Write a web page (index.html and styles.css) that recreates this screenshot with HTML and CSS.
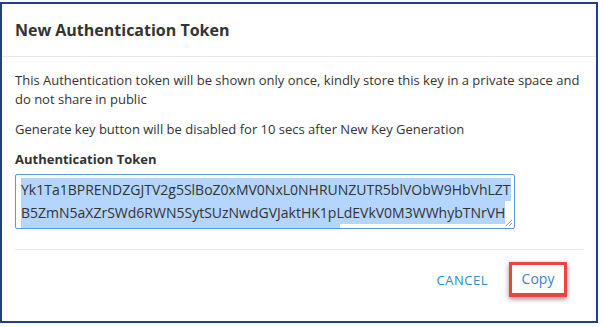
FILE: index.html
```html
<!DOCTYPE html>
<html lang="en">
<head>
    <meta charset="UTF-8">
    <title>New Authentication Token</title>
    <link rel="stylesheet" href="styles.css">
</head>
<body>
    <div class="modal">
        <div class="modal-header">
            <h2 class="modal-title">New Authentication Token</h2>
        </div>
        <div class="modal-body">
            <p class="note">This Authentication token will be shown only once, kindly store this key in a private space and do not share in public</p>
            <p class="note">Generate key button will be disabled for 10 secs after New Key Generation</p>
            <label class="field-label">Authentication Token</label>
            <div class="token-box">
                <div class="token-line"><span>Yk1Ta1BPRENDZGJTV2g5SlBoZ0xMV0NxL0NHRUNZUTR5blVObW9HbVhLZT</span></div>
                <div class="token-line"><span>B5ZmN5aXZrSWd6RWN5SytSUzNwdGVJaktHK1pLdEVkV0M3WWhybTNrVH</span></div>
                <div class="token-line"><span>dGJtcjRtVUtxa0ZQbWx3cGVZeVRLb2dNQ3lFRk1w</span></div>
                <svg class="grip" width="8" height="8" viewBox="0 0 8 8">
                    <path d="M7 1 L1 7 M7 4 L4 7" stroke="#999" stroke-width="1"/>
                </svg>
            </div>
        </div>
        <div class="modal-footer">
            <button class="btn btn-cancel">CANCEL</button>
            <button class="btn btn-copy">Copy</button>
        </div>
    </div>
</body>
</html>
```

FILE: styles.css
```css
body {
    margin: 0;
    background: #ffffff;
    font-family: "Open Sans", "Noto Sans", sans-serif;
    color: #333333;
}

.modal {
    box-sizing: border-box;
    width: 598px;
    height: 321px;
    margin-top: 2px;
    border: 2px solid #23417c;
    background: #ffffff;
    display: flex;
    flex-direction: column;
}

.modal-header {
    height: 52px;
    padding: 0 13px;
    display: flex;
    align-items: center;
    border-bottom: 1px solid #e8e8ec;
}

.modal-title {
    margin: 0;
    font-size: 16px;
    font-weight: 700;
    color: #333333;
}

.modal-body {
    padding: 14px 13px 0;
}

.note {
    margin: 0 0 11px;
    font-size: 13px;
    line-height: 19px;
}

.field-label {
    display: block;
    font-size: 13px;
    font-weight: 700;
    line-height: 19px;
    margin-bottom: 5px;
}

.token-box {
    position: relative;
    box-sizing: border-box;
    width: 500px;
    height: 55px;
    border: 1px solid #5b9ad8;
    border-radius: 2px;
    padding: 3px 3px 0 5px;
    overflow: hidden;
    font-size: 14px;
}

.token-line {
    line-height: 23px;
    white-space: nowrap;
}

.token-line span {
    background: #b4d5fe;
    padding: 2px 0;
}

.grip {
    position: absolute;
    right: 1px;
    bottom: 1px;
}

.modal-footer {
    margin: 20px 13px 0;
    border-top: 1px solid #e8e8ec;
    display: flex;
    justify-content: flex-end;
    align-items: center;
    gap: 15px;
    padding: 12px 16px 0 0;
}

.btn {
    background: none;
    border: none;
    font-family: inherit;
    cursor: pointer;
}

.btn-cancel {
    color: #2a8bcb;
    font-size: 13px;
    letter-spacing: 0.5px;
}

.btn-copy {
    box-sizing: border-box;
    width: 58px;
    height: 35px;
    border: 3px solid #ea4444;
    box-shadow: 0 2px 5px rgba(0, 0, 0, 0.45);
    color: #3d7fd3;
    font-size: 14px;
    padding: 0 0 3px;
    position: relative;
}

.btn-copy::after {
    content: "";
    position: absolute;
    left: 0;
    right: 0;
    bottom: 0;
    height: 1px;
    background: #3d7fd3;
}
```
